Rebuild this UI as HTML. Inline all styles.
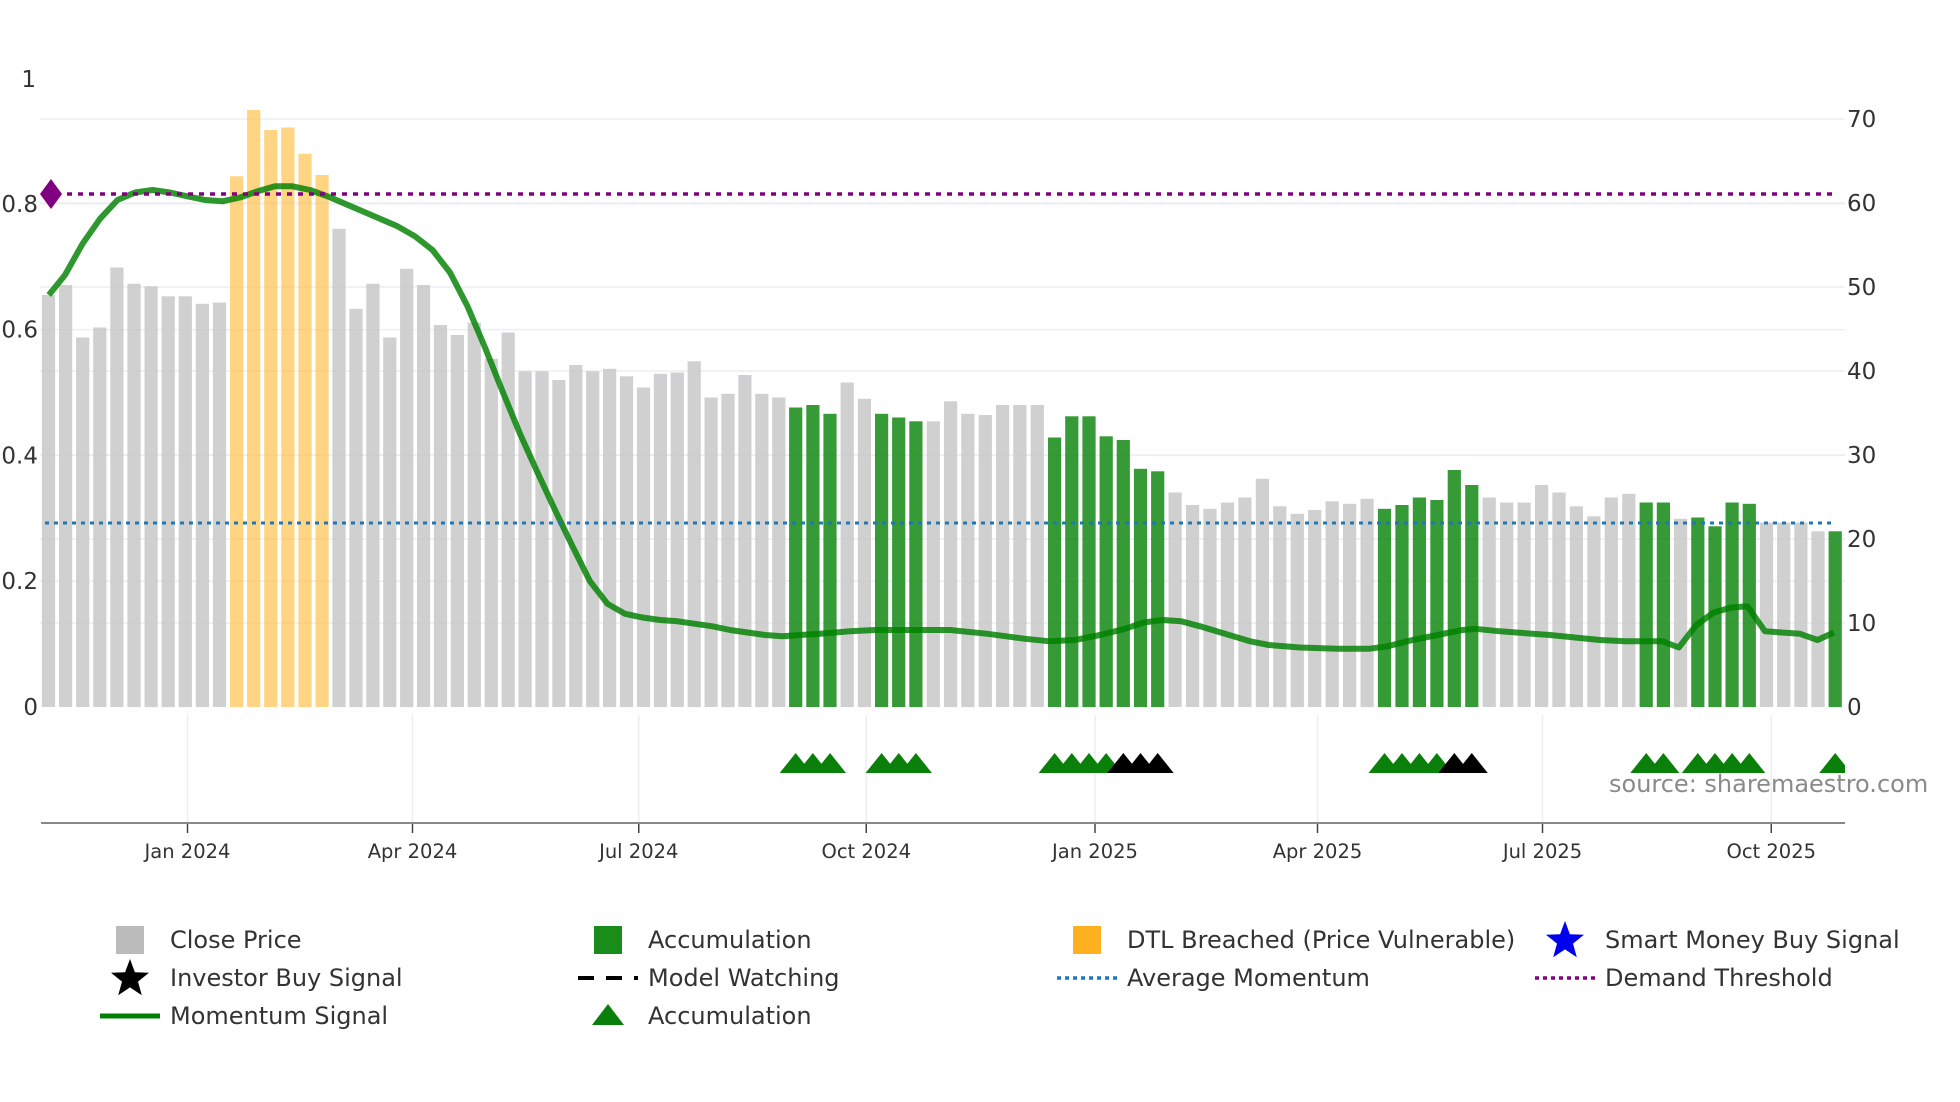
<!DOCTYPE html>
<html><head><meta charset="utf-8"><style>
html,body{margin:0;padding:0;background:#fff;width:1960px;height:1102px;overflow:hidden}
svg{display:block;font-family:"DejaVu Sans","Liberation Sans",sans-serif}
</style></head><body>
<svg id="c" width="1960" height="1102" xmlns="http://www.w3.org/2000/svg"></svg>
<script>
const S=1.25, svg=document.getElementById('c');
let h='';
for(let v=10;v<=70;v+=10){const y=707-v*8.4;h+=`<line x1="40" x2="1845" y1="${y}" y2="${y}" stroke="#eceef3" stroke-width="1.5"/>`;}
for(let v=0.2;v<=0.81;v+=0.2){const y=707-v*629;h+=`<line x1="40" x2="1845" y1="${y}" y2="${y}" stroke="#eceef3" stroke-width="1.5"/>`;}
const tops=[236,228,270,262,214,227,229,237,237,243,242,141,88,104,102,123,140,183,247,227,270,215,228,260,268,258,287,266,297,297,304,292,297,295,301,310,299,298,289,318,315,300,315,318,326,324,331,306,319,331,334,337,337,321,331,332,324,324,324,350,333,333,349,352,375,377,394,404,407,402,398,383,405,411,408,401,403,399,407,404,398,400,376,388,398,402,402,388,394,405,413,398,395,402,402,415,414,421,402,403,418,418,418,425,425];
const green=new Set([44,45,46,49,50,51,59,60,61,62,63,64,65,78,79,80,81,82,83,93,94,96,97,98,99,104]);
const anc=[[0,0],[16,-1],[30,-4],[44,-7],[51,-7],[59,-6],[65,-6],[79,-3],[93,0],[104,0]];
function off(i){for(let k=0;k<anc.length-1;k++){const a=anc[k],b=anc[k+1];if(i>=a[0]&&i<=b[0])return (a[1]+(b[1]-a[1])*(i-a[0])/(b[0]-a[0]))*S;}return 0;}
function bx(i){return 48.5+i*17.18+off(i);}
for(let i=0;i<105;i++){const cx=bx(i),y=tops[i]*S;let col='#c8c8c8',op=0.85;
 if(i>=11&&i<=16){col='#ffc24f';op=0.7}else if(green.has(i)){col='#1a8c1a';op=0.88}
 h+=`<rect x="${(cx-6.6).toFixed(1)}" y="${y.toFixed(1)}" width="13.2" height="${(707-y).toFixed(1)}" fill="${col}" fill-opacity="${op}"/>`;}
const pts=[[39,236],[52,220],[66,195],[80,175],[94,160],[108,154],[122,152],[136,154],[150,157],[164,160],[178,161],[192,158],[206,153],[220,149],[234,149],[248,152],[262,157],[276,163],[290,169],[304,175],[318,181],[332,189],[346,200],[360,218],[374,245],[388,278],[402,313],[416,347],[430,378],[444,408],[458,437],[472,465],[486,483],[500,491],[514,494],[528,496],[542,497],[556,499],[570,501],[584,504],[598,506],[612,508],[626,509],[640,508],[656,507],[680,505],[700,504],[760,504],[790,507],[820,511],[840,513],[860,512],[880,508],[900,503],[915,498],[930,496],[945,497],[960,501],[980,507],[1000,513],[1015,516],[1040,518],[1070,519],[1095,519],[1110,517],[1130,512],[1150,508],[1170,504],[1180,503],[1200,505],[1240,508],[1280,512],[1300,513],[1330,513],[1343,518],[1357,500],[1371,490],[1385,486],[1398,485],[1412,505],[1440,507],[1454,512],[1467,506]];
h+=`<polyline fill="none" stroke="#008000" stroke-opacity="0.82" stroke-width="6" stroke-linejoin="round" points="${pts.map(p=>(p[0]*S).toFixed(1)+','+(p[1]*S).toFixed(1)).join(' ')}"/>`;
h+=`<line x1="45" x2="1832" y1="194" y2="194" stroke="#800080" stroke-width="3.5" stroke-dasharray="5,6"/>`;
h+=`<line x1="45" x2="1832" y1="523" y2="523" stroke="#1f77b4" stroke-width="3" stroke-dasharray="4,5"/>`;
h+=`<path d="M40 194 L51 179 L62 194 L51 209 Z" fill="#800080"/>`;
const xt=[[150,'Jan 2024'],[330,'Apr 2024'],[511,'Jul 2024'],[693,'Oct 2024'],[876,'Jan 2025'],[1054,'Apr 2025'],[1234,'Jul 2025'],[1417,'Oct 2025']];
xt.forEach(t=>{const x=t[0]*S;h+=`<line x1="${x}" x2="${x}" y1="715" y2="823" stroke="#eceef3" stroke-width="1.5"/><line x1="${x}" x2="${x}" y1="823" y2="833" stroke="#444" stroke-width="1.5"/><text x="${x}" y="858" font-size="19.5" fill="#333" text-anchor="middle">${t[1]}</text>`;});
h+=`<line x1="41" x2="1845" y1="823" y2="823" stroke="#888" stroke-width="2"/>`;
const tri={44:'g',45:'g',46:'g',49:'g',50:'g',51:'g',59:'g',60:'g',61:'g',62:'g',63:'k',64:'k',65:'k',78:'g',79:'g',80:'g',81:'g',82:'k',83:'k',93:'g',94:'g',96:'g',97:'g',98:'g',99:'g',104:'g'};
h+='<defs><clipPath id="cp"><rect x="0" y="700" width="1845" height="120"/></clipPath></defs><g clip-path="url(#cp)">';
for(const k in tri){const cx=bx(+k);h+=`<path d="M${cx-16} 773 L${cx} 753 L${cx+16} 773 Z" fill="${tri[k]=='g'?'#0a800a':'#000'}"/>`;}
h+='</g>';
h+=`<text x="1609" y="792" font-size="24" fill="#8a8a8a">source: sharemaestro.com</text>`;
h+=`<text x="36" y="87" font-size="23" fill="#333" text-anchor="end">1</text>`;
[[0.8,'0.8'],[0.6,'0.6'],[0.4,'0.4'],[0.2,'0.2'],[0,'0']].forEach(a=>{h+=`<text x="38" y="${707-a[0]*629+8}" font-size="23" fill="#333" text-anchor="end">${a[1]}</text>`;});
for(let v=0;v<=70;v+=10)h+=`<text x="1847" y="${707-v*8.4+8}" font-size="23" fill="#333">${v}</text>`;
const lg=[[130,940,'sq','#bbb','Close Price'],[608,940,'sq','#1a8c1a','Accumulation'],[1087,940,'sq','#ffb020','DTL Breached (Price Vulnerable)'],[1565,940,'star','#0000ee','Smart Money Buy Signal'],
[130,978,'star','#000','Investor Buy Signal'],[608,978,'dash','#000','Model Watching'],[1087,978,'dot','#1f77b4','Average Momentum'],[1565,978,'dot','#800080','Demand Threshold'],
[130,1016,'line','#008000','Momentum Signal'],[608,1016,'tri','#0a800a','Accumulation']];
function star(cx,cy,r,c){let p=[];for(let i=0;i<10;i++){const a=-Math.PI/2+i*Math.PI/5,rr=i%2?r*0.42:r;p.push((cx+rr*Math.cos(a)).toFixed(1)+','+(cy+rr*Math.sin(a)).toFixed(1));}return `<polygon points="${p.join(' ')}" fill="${c}"/>`;}
lg.forEach(l=>{const [x,y,t,c,s]=l;
 if(t=='sq')h+=`<rect x="${x-14}" y="${y-14}" width="28" height="28" fill="${c}"/>`;
 if(t=='star')h+=star(x,y+1,20,c);
 if(t=='dash')h+=`<line x1="${x-30}" x2="${x+30}" y1="${y}" y2="${y}" stroke="${c}" stroke-width="4" stroke-dasharray="16,12"/>`;
 if(t=='dot')h+=`<line x1="${x-30}" x2="${x+30}" y1="${y}" y2="${y}" stroke="${c}" stroke-width="3.5" stroke-dasharray="4,4"/>`;
 if(t=='line')h+=`<line x1="${x-30}" x2="${x+30}" y1="${y}" y2="${y}" stroke="${c}" stroke-width="5"/>`;
 if(t=='tri')h+=`<path d="M${x-16} ${y+9} L${x} ${y-12} L${x+16} ${y+9} Z" fill="${c}"/>`;
 h+=`<text x="${x+40}" y="${y+8}" font-size="24" fill="#333">${s}</text>`;});
svg.innerHTML=h;
</script>
</body></html>
